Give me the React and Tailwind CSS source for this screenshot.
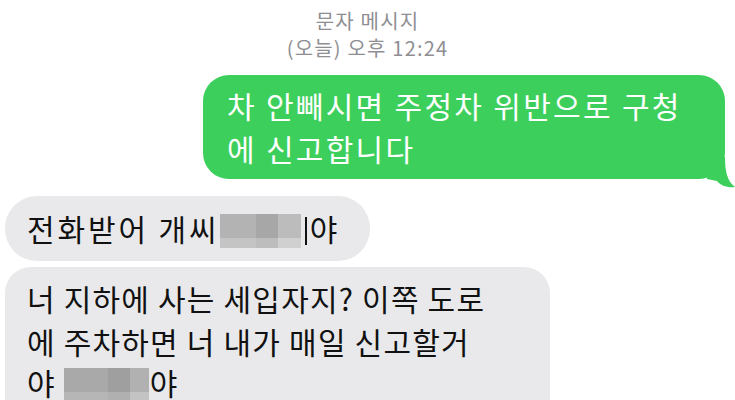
import React from 'react';

const font = { fontFamily: '"Noto Sans CJK KR", "Noto Sans", sans-serif' };

function Mosaic({ w, cells, dots }) {
    return (
        <span className="relative inline-flex align-middle h-[34px] mr-[1px] -mt-[4px]" style={{ width: w }}>
            {cells.map((c, i) => (
                <span key={i} className="h-full flex flex-col" style={{ width: c.w }}>
                    <span className="flex-1" style={{ background: c.top }} />
                    <span className="h-[10px]" style={{ background: c.bottom }} />
                </span>
            ))}
            {dots && (
                <span className="absolute left-0 right-0 -bottom-[5px] flex justify-around px-[14px]">
                    <span className="w-[3px] h-[3px] bg-[#333] rounded-full" />
                    <span className="w-[3px] h-[3px] bg-[#333] rounded-full" />
                    <span className="w-[3px] h-[3px] bg-[#333] rounded-full" />
                </span>
            )}
        </span>
    );
}

export default function App() {
    return (
        <div className="w-[735px] h-[400px] overflow-hidden bg-white" style={font}>
            {/* Header */}
            <div className="pt-[7px] text-center text-[#8e8e93] text-[20px] leading-[27px] tracking-[1.2px]">
                <div>문자 메시지</div>
                <div>(오늘) 오후 12:24</div>
            </div>

            {/* Outgoing */}
            <div className="flex justify-end pr-[10px] mt-[14px]">
                <div className="relative w-[522px] bg-[#3dcf5c] rounded-[26px] pl-[24px] py-[9px] text-white text-[30px] leading-[43px] tracking-[2.3px]">
                    <div className="whitespace-nowrap">차 안빼시면 주정차 위반으로 구청</div>
                    <div className="whitespace-nowrap">에 신고합니다</div>
                    <svg className="absolute -right-[10px] -bottom-[9px]" width="28" height="31" viewBox="0 0 28 31">
                        <path d="M0 0 L18 0 C18 14 20 24 28 30 C21 31 14 29 10 24 L0 22 Z" fill="#3dcf5c" />
                    </svg>
                </div>
            </div>

            {/* Incoming */}
            <div className="pl-[5px] mt-[17px] flex flex-col gap-[6px] text-[#111] text-[30px] leading-[43px] tracking-[1.2px]">
                <div className="w-[365px] bg-[#e9e9eb] rounded-[32px] pl-[22px] py-[11px] whitespace-nowrap">
                    <span className="tracking-[2.9px]">전화받어 개씨</span>
                    <Mosaic
                        w={81}
                        cells={[
                            { w: 36, top: '#b3b3b3', bottom: '#c4c4c4' },
                            { w: 22, top: '#a7a7a7', bottom: '#bdbdbd' },
                            { w: 23, top: '#bcbcbc', bottom: '#d0d0d0' },
                        ]}
                    />
                    <span className="inline-block w-[2px] h-[28px] bg-[#111] align-middle -mt-[4px] mx-[3px]" />
                    야
                </div>
                <div className="w-[545px] bg-[#e9e9eb] rounded-[26px] pl-[22px] pt-[10px] pb-[20px]">
                    <div className="whitespace-nowrap">너 지하에 사는 세입자지? 이쪽 도로</div>
                    <div className="whitespace-nowrap">에 주차하면 너 내가 매일 신고할거</div>
                    <div className="whitespace-nowrap -mt-[2px]">
                        야{' '}
                        <Mosaic
                            w={85}
                            dots
                            cells={[
                                { w: 44, top: '#a9a9a9', bottom: '#b6b6b6' },
                                { w: 22, top: '#9f9f9f', bottom: '#b0b0b0' },
                                { w: 19, top: '#b1b1b1', bottom: '#c3c3c3' },
                            ]}
                        />
                        야
                    </div>
                </div>
            </div>
        </div>
    );
}
